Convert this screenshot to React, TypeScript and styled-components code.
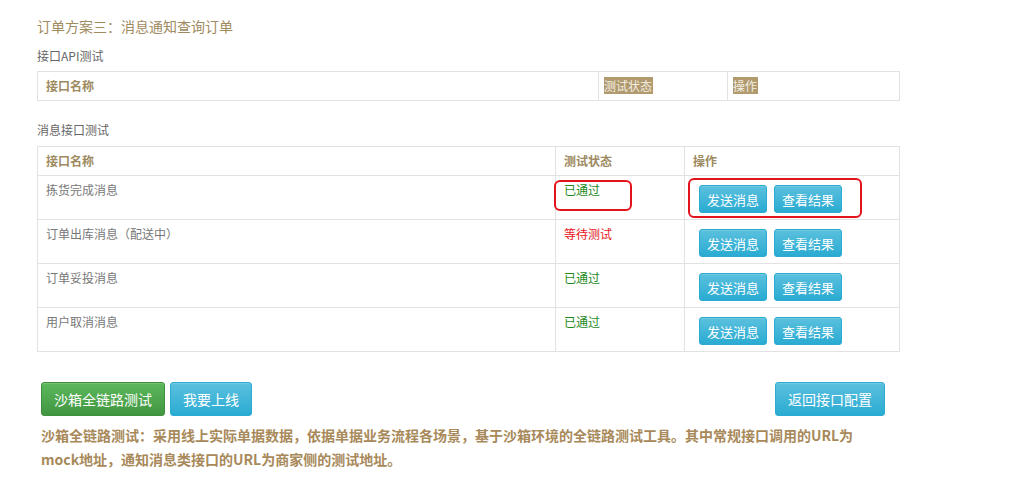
import React from 'react';
import styled, { createGlobalStyle } from 'styled-components';

const GlobalStyle = createGlobalStyle`
  html, body {
    margin: 0;
    padding: 0;
    background: #fff;
    font-family: "Noto Sans CJK SC", "Noto Sans", sans-serif;
  }
`;

const Page = styled.div`
  width: 862px;
  padding: 16px 0 0 37px;
`;

const Title = styled.h3`
  margin: 0;
  font-size: 14px;
  line-height: 20px;
  font-weight: normal;
  color: #a08a60;
`;

const SectionLabel = styled.div<{ $top: number }>`
  margin-top: ${p => p.$top}px;
  font-size: 12px;
  line-height: 18px;
  color: #666;
`;

const Table = styled.table<{ $top: number }>`
  width: 862px;
  margin-top: ${p => p.$top}px;
  border-collapse: collapse;
  table-layout: fixed;
  font-size: 12px;
`;

const Th = styled.th<{ $w: number }>`
  width: ${p => p.$w}px;
  height: 29px;
  padding: 0 8px;
  border: 1px solid #e2e2e2;
  text-align: left;
  font-weight: bold;
  color: #9d8a5f;
  line-height: 16px;
  box-sizing: border-box;
`;

const Selected = styled.span`
  background: #b09a6e;
  color: #f4efe4;
  font-weight: normal;
  padding: 0 1px 0 0;
  margin-left: -3px;
`;

const Tr = styled.tr`
  height: 44px;
`;

const Td = styled.td`
  position: relative;
  padding: 6px 8px 0;
  border: 1px solid #e2e2e2;
  vertical-align: top;
  color: #777;
  line-height: 16px;
`;

const ActionTd = styled(Td)`
  padding: 9px 8px 0 14px;
`;

const Status = styled.span<{ $ok: boolean }>`
  color: ${p => (p.$ok ? '#1e8a1e' : '#e8141a')};
`;

const Btn = styled.button<{ $kind?: 'info' | 'success'; $big?: boolean }>`
  height: ${p => (p.$big ? 34 : 28)}px;
  padding: 0 ${p => (p.$big ? 12 : 7)}px;
  border-radius: 3px;
  border: 1px solid ${p => (p.$kind === 'success' ? '#3e8f3e' : '#2aabd2')};
  background: ${p =>
    p.$kind === 'success'
      ? 'linear-gradient(#5cb85c, #419641)'
      : 'linear-gradient(#5bc0de, #2aabd2)'};
  color: #fff;
  font-family: "Noto Sans CJK SC", sans-serif;
  font-size: ${p => (p.$big ? 14 : 13)}px;
  line-height: 1;
  cursor: pointer;
  box-shadow: inset 0 1px 0 rgba(255, 255, 255, 0.15);
`;

const BtnGroup = styled.div`
  display: flex;
  gap: 7px;
`;

const Mark = styled.div<{ $l: number; $t: number; $w: number; $h: number }>`
  position: absolute;
  left: ${p => p.$l}px;
  top: ${p => p.$t}px;
  width: ${p => p.$w}px;
  height: ${p => p.$h}px;
  border: 2px solid #e3131b;
  border-radius: 6px;
  box-sizing: border-box;
  pointer-events: none;
`;

const Footer = styled.div`
  margin-top: 30px;
  padding-left: 4px;
  width: 844px;
`;

const FooterBar = styled.div`
  display: flex;
  align-items: center;
  gap: 5px;
`;

const Spacer = styled.div`
  flex: 1;
`;

const Note = styled.p`
  margin: 7px 0 0;
  width: 830px;
  font-size: 14px;
  line-height: 24px;
  font-weight: bold;
  color: #a8895a;
`;

type Row = { name: string; ok: boolean; marked?: boolean };

const rows: Row[] = [
  { name: '拣货完成消息', ok: true, marked: true },
  { name: '订单出库消息（配送中）', ok: false },
  { name: '订单妥投消息', ok: true },
  { name: '用户取消消息', ok: true },
];

export default function App() {
  return (
    <>
      <GlobalStyle />
      <Page>
        <Title>订单方案三：消息通知查询订单</Title>
        <SectionLabel $top={11}>接口API测试</SectionLabel>
        <Table $top={6}>
          <thead>
            <tr>
              <Th $w={561}>接口名称</Th>
              <Th $w={129}><Selected>测试状态</Selected></Th>
              <Th $w={172}><Selected>操作</Selected></Th>
            </tr>
          </thead>
        </Table>

        <SectionLabel $top={20}>消息接口测试</SectionLabel>
        <Table $top={7}>
          <thead>
            <tr>
              <Th $w={518}>接口名称</Th>
              <Th $w={129}>测试状态</Th>
              <Th $w={215}>操作</Th>
            </tr>
          </thead>
          <tbody>
            {rows.map(r => (
              <Tr key={r.name}>
                <Td>{r.name}</Td>
                <Td>
                  <Status $ok={r.ok}>{r.ok ? '已通过' : '等待测试'}</Status>
                  {r.marked && <Mark $l={-2} $t={4} $w={78} $h={31} />}
                </Td>
                <ActionTd>
                  <BtnGroup>
                    <Btn>发送消息</Btn>
                    <Btn>查看结果</Btn>
                  </BtnGroup>
                  {r.marked && <Mark $l={3} $t={2} $w={174} $h={40} />}
                </ActionTd>
              </Tr>
            ))}
          </tbody>
        </Table>

        <Footer>
          <FooterBar>
            <Btn $kind="success" $big>沙箱全链路测试</Btn>
            <Btn $big>我要上线</Btn>
            <Spacer />
            <Btn $big>返回接口配置</Btn>
          </FooterBar>
          <Note>
            沙箱全链路测试：采用线上实际单据数据，依据单据业务流程各场景，基于沙箱环境的全链路测试工具。其中常规接口调用的URL为mock地址，通知消息类接口的URL为商家侧的测试地址。
          </Note>
        </Footer>
      </Page>
    </>
  );
}
